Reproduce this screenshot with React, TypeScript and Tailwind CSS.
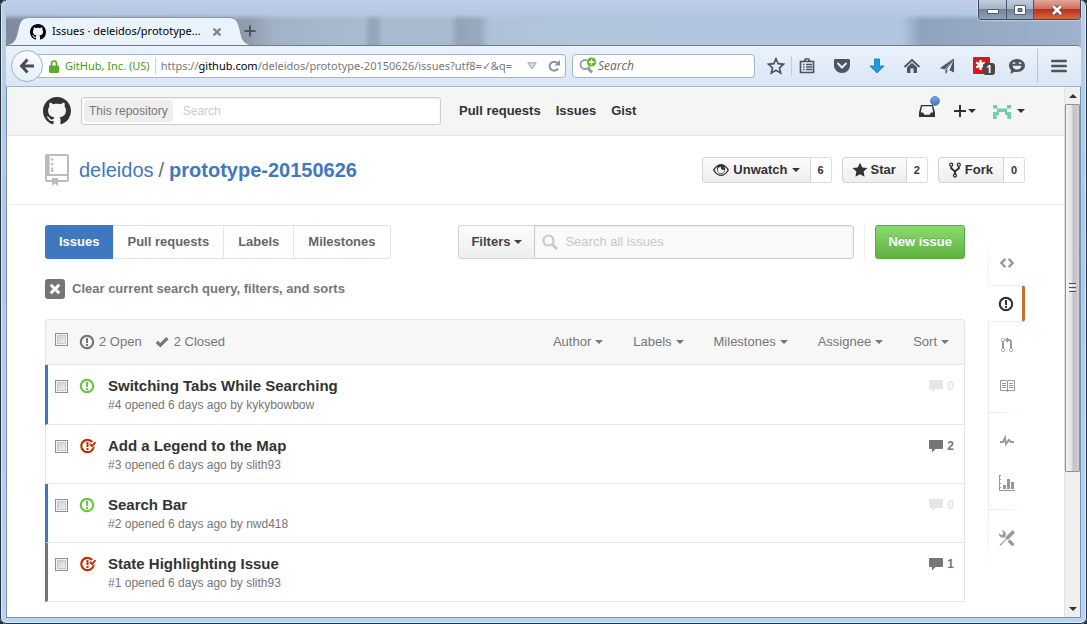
import React from "react";

type IconProps = { className?: string };

const octicons = {
  github: {
    w: 16,
    d: "M8 0C3.58 0 0 3.58 0 8c0 3.54 2.29 6.53 5.47 7.59.4.07.55-.17.55-.38 0-.19-.01-.82-.01-1.49-2.01.37-2.53-.49-2.69-.94-.09-.23-.48-.94-.82-1.13-.28-.15-.68-.52-.01-.53.63-.01 1.08.58 1.23.82.72 1.21 1.87.87 2.33.66.07-.52.28-.87.51-1.07-1.78-.2-3.64-.89-3.64-3.95 0-.87.31-1.59.82-2.15-.08-.2-.36-1.02.08-2.12 0 0 .67-.21 2.2.82.64-.18 1.32-.27 2-.27.68 0 1.36.09 2 .27 1.53-1.04 2.2-.82 2.2-.82.44 1.1.16 1.92.08 2.12.51.56.82 1.27.82 2.15 0 3.07-1.87 3.75-3.65 3.95.29.25.54.73.54 1.48 0 1.07-.01 1.93-.01 2.2 0 .21.15.46.55.38A8.013 8.013 0 0 0 16 8c0-4.42-3.58-8-8-8z",
  },
  opened: {
    w: 14,
    d: "M7 2.900c2.800 0 5.100 2.300 5.100 5.100s-2.300 5.100-5.100 5.100S1.900 10.800 1.900 8 4.200 2.900 7 2.900zM7 .8C3 .8-.2 4-.2 8S3 15.200 7 15.200s7.200-3.200 7.200-7.200S11 .8 7 .8zm1 3.200H6v5h2V4zm0 6H6v2h2v-2z",
  },
  closed: {
    w: 15,
    d: "M6.500 10h2v2h-2v-2zm2-6h-2v5h2V4zm2 1.200L9.200 6.500 12 9.500l4.200-4.700-1.300-1.300L12 6.700l-1.500-1.500zM7.500 13.100C4.700 13.100 2.400 10.800 2.400 8s2.300-5.100 5.100-5.100c1.600 0 3 .7 4 1.900L13 3.300A7.100 7.100 0 0 0 7.500.8C3.500.8.3 4 .3 8s3.200 7.200 7.200 7.200S14.700 12 14.700 8l-2.400 1.900c-.8 1.900-2.600 3.200-4.800 3.200z",
  },
  check: { w: 12, d: "M12.500 5.200l-8.200 8.300L-.3 8.900l2.200-2.200 2.400 2.400 6-6z" },
  comment: {
    w: 14,
    d: "M13 2H1c-.55 0-1 .45-1 1v7c0 .55.45 1 1 1h2v3.500L6.500 11H13c.55 0 1-.45 1-1V3c0-.55-.45-1-1-1z",
  },
  repo: {
    w: 12,
    d: "M4.200 9H3V8h1.200v1zm0-2.200H3v1h1.200v-1zm0-2.200H3v1h1.200v-1zm0-2.400H3v1h1.200v-1zM12 1v12c0 .55-.45 1-1 1H6.500v2L5 14.800 3.500 16v-2H1c-.55 0-1-.45-1-1V1c0-.55.45-1 1-1h10c.55 0 1 .45 1 1zm-1 10H1v2h2.500v-1h3v1H11v-2zm0-10H2.300v9H11V1z",
  },
  eye: {
    w: 16,
    d: "M8.060 2C3 2 0 8 0 8s3 6 8.060 6C13 14 16 8 16 8s-3-6-7.940-6zM8 12.700C5 12.700 2.700 10.500 1.600 8 2.300 6.600 3.300 5.400 4.600 4.500A5 5 0 0 0 8 12a5 5 0 0 0 3.400-7.500c1.300.9 2.300 2.100 3 3.500-1.100 2.500-3.400 4.700-6.400 4.700zM11.300 8c0 1.800-1.500 3.200-3.300 3.200S4.700 9.800 4.700 8 6.200 4.700 8 4.700c-.6 1.500.5 3 1.700 3.200.6.1 1.200 0 1.600-.400z",
  },
  star: { w: 14, d: "M14.500 6l-5.200-.6L7 .7 4.700 5.400-.5 6l3.900 3.600-1 5.100L7 12.200l4.600 2.500-1-5.100z" },
  pull: {
    w: 12,
    d: "M11 11.28V5c-.03-.78-.34-1.47-.94-2.06C9.46 2.35 8.78 2.03 8 2H7V0L4 3l3 3V4h1c.27.02.48.11.69.31.21.2.3.42.31.69v6.28A1.993 1.993 0 0 0 10 15a1.993 1.993 0 0 0 1-3.72zm-1 2.92c-.66 0-1.2-.55-1.2-1.2 0-.65.55-1.2 1.2-1.2.65 0 1.2.55 1.2 1.2 0 .65-.55 1.2-1.2 1.2zM4 3c0-1.11-.89-2-2-2a1.993 1.993 0 0 0-1 3.72v6.56A1.993 1.993 0 0 0 2 15a1.993 1.993 0 0 0 1-3.72V4.72c.59-.34 1-.98 1-1.72zm-.8 10c0 .66-.55 1.2-1.2 1.2-.65 0-1.2-.55-1.2-1.2 0-.65.55-1.2 1.2-1.2.65 0 1.2.55 1.2 1.2zM2 4.2C1.34 4.2.8 3.65.8 3c0-.65.55-1.2 1.2-1.2.65 0 1.2.55 1.2 1.2 0 .65-.55 1.2-1.2 1.2z",
  },
  code: { w: 14, d: "M9.500 3L7.800 4.700 11 8l-3.200 3.300L9.500 13 14.300 8 9.500 3zm-5 0L-.3 8l4.800 5 1.700-1.700L3 8l3.200-3.300L4.500 3z" },
  book: {
    w: 16,
    d: "M3 5h4v1H3V5zm0 3h4V7H3v1zm0 2h4V9H3v1zm11-5h-4v1h4V5zm0 2h-4v1h4V7zm0 2h-4v1h4V9zm2-6v9c0 .55-.45 1-1 1H9.5l-1 1-1-1H2c-.55 0-1-.45-1-1V3c0-.55.45-1 1-1h5.5l1 1 1-1H15c.55 0 1 .45 1 1zm-8 .5L7.5 3H2v9h6V3.5zm7-.5H9.5l-.5.5V12h6V3z",
  },
  pulse: { w: 14, d: "M11.5 8L8.8 5.4 6.6 8.5 5.5 1.6 2.38 8H0v2h3.6l.9-1.8.9 5.4L9 8.5l1.6 1.5H14V8z" },
  graph: {
    w: 16,
    d: "M16 15v1H0V0h2v1H1v3h1v1H1v3h1v1H1v3h1v1H1v2h15zM7 14H4v-4h3v4zm4 0H8V4h3v10zm4 0h-3V7h3v7z",
  },
  tools: {
    w: 16,
    d: "M4.48 7.27c.26.26 1.28 1.33 1.28 1.33l.56-.58-.88-.91 1.69-1.8s-.76-.74-.43-.45c.32-1.19.03-2.51-.87-3.44C4.93.5 3.66.2 2.52.51l1.93 2-.51 1.96-1.89.52-1.93-1.99C-.19 4.17.1 5.48 1 6.4c.94.98 2.29 1.26 3.48.87zm6.44 1.94l-2.33 2.3 3.84 3.98c.31.33.73.49 1.14.49.41 0 .82-.16 1.14-.49.63-.65.63-1.7 0-2.35l-3.79-3.93zM16 2.53L13.55 0 6.33 7.46l.88.91-4.31 4.46-.99.53-1.39 2.27.35.37 2.2-1.44.51-1.02L7.9 9.08l.88.91L16 2.53z",
  },
  x: { w: 12, d: "M8.100 8l3.200 3.200-2.100 2.100L6 10.100l-3.200 3.200-2.100-2.100L3.900 8 .7 4.800l2.100-2.100L6 5.900l3.200-3.200 2.100 2.100z" },
};

function Octicon({ name, className = "h-4" }: { name: keyof typeof octicons; className?: string }) {
  const icon = octicons[name];
  return (
    <svg viewBox={`0 0 ${icon.w} 16`} className={`shrink-0 overflow-visible ${className}`} fill="currentColor" aria-hidden="true">
      <path fillRule="evenodd" d={icon.d} />
    </svg>
  );
}

function ForkIcon() {
  return (
    <svg viewBox="0 0 12 16" className="h-4 shrink-0" fill="none" stroke="currentColor" aria-hidden="true">
      <circle cx="2.200" cy="2.700" r="1.500" strokeWidth="1.300" />
      <circle cx="9.800" cy="2.700" r="1.500" strokeWidth="1.300" />
      <circle cx="6" cy="13.500" r="1.500" strokeWidth="1.300" />
      <path d="M2.200 4.500v1.800L6 9.500l3.800-3.200V4.500M6 9v3" strokeWidth="2" />
    </svg>
  );
}

function Caret({ className = "" }: IconProps) {
  return (
    <svg viewBox="0 0 8 4" className={`h-1 w-2 shrink-0 ${className}`} fill="currentColor" aria-hidden="true">
      <path d="M0 0h8L4 4z" />
    </svg>
  );
}

/* ---------- Browser chrome ---------- */

function TabStrip() {
  return (
    <div className="flex h-[45px] items-end bg-[linear-gradient(to_bottom,#bccfe6_0,#b3c8e3_14px,transparent_20px),linear-gradient(to_right,#7f8b9c_0,#8f9cae_240px,#a3b3c7_270px,#abbbcf_358px,#97a7bb_364px,#97a7bb_370px,#abbbcf_378px,#abbbcf_444px,#95a4b8_452px,#9aaabe_474px,#afc1d6_484px,#b1c5dd_560px,#b1c6de_895px,#8fa3bf_915px,#a0b3cd_1080px)]">
      <div className="flex h-[28px] items-stretch">
        <svg viewBox="0 0 24 28" className="h-7 w-6" aria-hidden="true">
          <path d="M0 28C9 27 10 22 12 13C14 4 16 .5 24 .5V28z" fill="#eaf2fb" />
          <path d="M0 27.500C9 27 10 22 12 13C14 4 16 .5 24 .5" fill="none" stroke="#7c8ba0" strokeWidth=".8" />
        </svg>
        <div className="flex w-[198px] items-center border-t border-[#8b99ad] bg-[#eaf2fb]">
          <Octicon name="github" className="mr-[6px] h-4 w-4 text-black" />
          <span className="flex-1 whitespace-nowrap text-[11px] text-black">Issues · deleidos/prototype...</span>
          <button aria-label="Close tab" className="mr-[7px] text-[#85898f]">
            <svg viewBox="0 0 8 8" className="h-2 w-2" stroke="currentColor" strokeWidth="2.400">
              <path d="M.5.5l7 7M7.500.5l-7 7" />
            </svg>
          </button>
        </div>
        <svg viewBox="0 0 24 28" className="h-7 w-6" aria-hidden="true">
          <path d="M24 28C15 27 14 22 12 13C10 4 8 .5 0 .5V28z" fill="#eaf2fb" />
          <path d="M24 27.500C15 27 14 22 12 13C10 4 8 .5 0 .5" fill="none" stroke="#7c8ba0" strokeWidth=".8" />
        </svg>
      </div>
      <button aria-label="New tab" className="mb-2 ml-[-8px] text-[#4b5563]">
        <svg viewBox="0 0 12 12" className="h-3 w-3" stroke="currentColor" strokeWidth="2">
          <path d="M6 .5v11M.5 6h11" />
        </svg>
      </button>
      <div className="ml-auto flex h-5 self-start overflow-hidden rounded-b border border-t-0 border-[#3c4859] shadow-[0_0_1px_1px_rgba(255,255,255,.4)]">
        <button aria-label="Minimize" className="flex w-[28px] items-center justify-center border-r border-[#4a5669] bg-[linear-gradient(#c3cedd_0,#a3b3c8_45%,#71839c_50%,#91a3bc)] pt-1">
          <svg viewBox="0 0 12 5" className="h-[5px] w-3"><path d="M.5.5h11v4H.5z" fill="#fff" stroke="#535b69" /></svg>
        </button>
        <button aria-label="Maximize" className="flex w-[27px] items-center justify-center border-r border-[#4a5669] bg-[linear-gradient(#c3cedd_0,#a3b3c8_45%,#71839c_50%,#91a3bc)]">
          <svg viewBox="0 0 12 10" className="h-[10px] w-3"><path fillRule="evenodd" d="M.5.5h11v9H.5zM4 3.500h4v3H4z" fill="#fff" stroke="#535b69" /></svg>
        </button>
        <button aria-label="Close" className="flex w-[46px] items-center justify-center bg-[linear-gradient(#e2a79b_0,#d0705e_45%,#b8301a_50%,#cf6a4a)]">
          <svg viewBox="0 0 12 10" className="h-[10px] w-3">
            <path d="M2 1l8 8M10 1L2 9" stroke="#5d4750" strokeWidth="4.500" />
            <path d="M2 1l8 8M10 1L2 9" stroke="#fff" strokeWidth="2.600" />
          </svg>
        </button>
      </div>
    </div>
  );
}

const toolButtons: { label: string; icon: React.ReactNode }[] = [
  {
    label: "Bookmark",
    icon: <path d="M9 1.800l2.200 4.900 5.300.6-4 3.500 1.200 5.200L9 13.300 4.300 16l1.200-5.200-4-3.500 5.300-.6z" fill="none" stroke="currentColor" strokeWidth="1.700" />,
  },
  {
    label: "Bookmarks menu",
    icon: (
      <>
        <path d="M2.500 4.500h13v11h-13zM6 4.500c0-1 1.500-1 1.500-2.500h3c0 1.500 1.500 1.500 1.500 2.500" fill="none" stroke="currentColor" strokeWidth="1.700" />
        <path d="M5 7.500h1.500M8 7.500h6M5 10h1.500M8 10h6M5 12.500h1.500M8 12.500h6" stroke="currentColor" strokeWidth="1.300" />
      </>
    ),
  },
  {
    label: "Pocket",
    icon: (
      <>
        <path d="M2.500 2h13c.8 0 1.500.7 1.500 1.500V8c0 4.500-3.600 8-8 8s-8-3.500-8-8V3.500C1 2.700 1.700 2 2.500 2z" fill="currentColor" />
        <path d="M5 6.500l4 4 4-4" fill="none" stroke="#e7effa" strokeWidth="2" strokeLinecap="round" />
      </>
    ),
  },
  { label: "Downloads", icon: <path d="M6.500 2h5v7H16l-7 7-7-7h4.500z" fill="#1b9be0" stroke="#1276b0" strokeWidth=".8" /> },
  {
    label: "Home",
    icon: (
      <>
        <path d="M1.500 10L9 3l7.500 7" fill="none" stroke="currentColor" strokeWidth="1.900" />
        <path d="M4 10.200L9 5.800l5 4.400V16h-3.500v-4.500h-3V16H4z" fill="currentColor" />
      </>
    ),
  },
  {
    label: "Share",
    icon: (
      <>
        <path d="M15.500 2L2.500 11l4 1.200z" fill="currentColor" stroke="currentColor" strokeWidth=".6" />
        <path d="M16 2v13.500l-4.500-2.200zM8 12.800l1.800.8L8 16.500z" fill="currentColor" />
        <path d="M15.800 2.500L8 12.300v4" fill="none" stroke="currentColor" strokeWidth="1" />
      </>
    ),
  },
  {
    label: "Passwords",
    icon: (
      <>
        <rect x="0" y="0" width="17" height="17" rx="1" fill="#cd1b1f" />
        <path d="M7.500 3v10M3.200 5.500l8.600 5M3.200 10.500l8.600-5" stroke="#fff" strokeWidth="2.400" />
      </>
    ),
  },
  {
    label: "Chat",
    icon: (
      <>
        <path d="M9 2c4.400 0 8 2.900 8 6.500S13.400 15 9 15c-.9 0-1.700-.1-2.500-.3L2.500 17l.6-3.800C1.800 12 1 10.300 1 8.500 1 4.900 4.600 2 9 2z" fill="currentColor" />
        <path d="M4.500 8.800h9c-.3 2.300-2.200 3.800-4.500 3.800S4.800 11.100 4.500 8.800z" fill="#e7effa" />
        <path d="M5 6.800c.3-1.500 1.700-1.500 2 0M11 6.800c.3-1.500 1.700-1.500 2 0" fill="none" stroke="#e7effa" strokeWidth="1.200" />
      </>
    ),
  },
];

function NavBar() {
  return (
    <div className="flex h-[42px] items-center rounded-tr border-b border-t border-b-[#9fb4d1] border-t-[#6d7c92] bg-[linear-gradient(#eaf2fb,#dae6f5)] pl-[5px] pr-[14px]">
      <button aria-label="Back" className="z-10 flex h-8 w-8 shrink-0 items-center justify-center rounded-full border border-[#a2b0c4] bg-[linear-gradient(#fbfdff,#e6eef8)] text-[#484e58]">
        <svg viewBox="0 0 16 16" className="h-4 w-4" fill="none" stroke="currentColor" strokeWidth="3">
          <path d="M8.500 1.500L2.500 8l6 6.500M3 8h12" />
        </svg>
      </button>
      <div className="ml-[-6px] flex h-6 min-w-0 flex-1 items-center rounded-r-sm border border-[#a3b4cc] bg-white pl-[11px] text-[11px]">
        <svg viewBox="0 0 10 13" className="h-[13px] w-[10px] shrink-0" aria-hidden="true">
          <path d="M2.500 6V3.500a2.500 2.500 0 0 1 5 0V6" fill="none" stroke="#5aa62b" strokeWidth="1.700" />
          <path d="M0 5.500h10V12l-1 1H1l-1-1z" fill="#5aad2a" />
        </svg>
        <span className="ml-[6px] whitespace-nowrap text-[#4a9a1c]">GitHub, Inc. (US)</span>
        <span className="mx-[5px] h-4 w-px shrink-0 bg-[#d0d5db]" />
        <label htmlFor="address" className="whitespace-nowrap text-[#777]">
          https://<span className="text-black">github.com</span>
        </label>
        <input id="address" aria-label="Address" defaultValue="/deleidos/prototype-20150626/issues?utf8=✓&q=" className="min-w-0 flex-1 bg-transparent text-[#777] outline-none" />
        <button aria-label="Show history" className="px-[6px]">
          <svg viewBox="0 0 10 8" className="h-2 w-[10px]"><path d="M.8.8h8.400L5 7z" fill="#d7dade" stroke="#a3a8af" /></svg>
        </button>
        <button aria-label="Reload" className="px-[5px] text-[#8b9096]">
          <svg viewBox="0 0 12 12" className="h-3 w-3" fill="none" stroke="currentColor" strokeWidth="2">
            <path d="M9.500 3.200A4.500 4.500 0 1 0 10 8.500" />
            <path d="M12 0v5.500H6.500z" fill="currentColor" stroke="none" />
          </svg>
        </button>
      </div>
      <label className="ml-[6px] flex h-6 w-[183px] items-center rounded-sm border border-[#a3b4cc] bg-white pl-[6px]">
        <svg viewBox="0 0 18 18" className="mr-[1px] h-[18px] w-[18px] shrink-0" aria-hidden="true">
          <circle cx="6" cy="7.500" r="4.500" fill="none" stroke="#929aa2" strokeWidth="1.800" />
          <path d="M9 11l4 4.500" stroke="#929aa2" strokeWidth="2.800" />
          <circle cx="12.500" cy="5" r="4.800" fill="#53b51c" stroke="#fff" strokeWidth=".6" />
          <path d="M12.500 2.200v5.600M9.700 5h5.600" stroke="#fff" strokeWidth="1.500" />
        </svg>
        <input aria-label="Search the web" placeholder="Search" className="min-w-0 flex-1 bg-transparent font-['Open_Sans',sans-serif] text-[12px] italic outline-none placeholder:text-[#666]" />
      </label>
      <div className="ml-[12px] flex items-center gap-[17px] text-[#4d545e]">
        {toolButtons.map((b, i) => (
          <React.Fragment key={b.label}>
            <button aria-label={b.label} className="relative">
              <svg viewBox="0 0 18 18" className="h-[18px] w-[18px]">{b.icon}</svg>
              {b.label === "Passwords" && (
                <span className="absolute -right-1 top-[6px] flex h-3 w-3 items-center justify-center rounded-[3px] bg-[#484848] text-[10px] font-bold leading-none text-white">1</span>
              )}
            </button>
            {i === 0 && <span className="-mx-[11px] h-5 w-px bg-[#c3cedd]" />}
          </React.Fragment>
        ))}
        <span className="-ml-[6px] -mr-[4px] h-[34px] w-px bg-[#bac7d8]" />
        <button aria-label="Open menu">
          <svg viewBox="0 0 16 14" className="h-[14px] w-4" stroke="currentColor" strokeWidth="2.400" strokeLinecap="round">
            <path d="M1.200 2h13.600M1.200 7h13.600M1.200 12h13.600" />
          </svg>
        </button>
      </div>
    </div>
  );
}

function ScrollBar() {
  return (
    <div className="flex w-4 shrink-0 flex-col border-l border-[#e3e3e3] bg-[#f0f0f0] text-[#333]">
      <button aria-label="Scroll up" className="flex h-[17px] items-center justify-center">
        <Caret className="rotate-180" />
      </button>
      <div className="flex flex-[74] flex-col items-center justify-center gap-px rounded-[1px] border border-[#909090] bg-[linear-gradient(to_right,#f4f4f4,#e2e2e2_45%,#c2c2c6_55%,#d0d0d3)]">
        <span className="h-px w-[7px] bg-[#555]" />
        <span className="h-px w-[7px] bg-white" />
        <span className="h-px w-[7px] bg-[#555]" />
        <span className="h-px w-[7px] bg-white" />
        <span className="h-px w-[7px] bg-[#555]" />
      </div>
      <div className="flex-[26]" />
      <button aria-label="Scroll down" className="flex h-[17px] items-center justify-center">
        <Caret />
      </button>
    </div>
  );
}

/* ---------- Page ---------- */

function SiteHeader() {
  return (
    <header className="flex h-[49px] items-center border-b border-[#e5e5e5] bg-[#f5f5f5] pl-[36px] pr-[39px]">
      <a href="#home" aria-label="Homepage" className="text-[#333]">
        <Octicon name="github" className="h-7 w-7" />
      </a>
      <div className="ml-[10px] flex h-7 w-[360px] items-center rounded-[3px] border border-[#ccc] bg-white p-[2px] shadow-[inset_0_1px_2px_rgba(0,0,0,.075)]">
        <label htmlFor="site-search" className="flex h-full items-center rounded-sm bg-[#eee] px-[5px] text-[12px] text-[#767676]">
          This repository
        </label>
        <input id="site-search" placeholder="Search" className="min-w-0 flex-1 bg-transparent px-[10px] text-[12px] outline-none placeholder:text-[#ccc]" />
      </div>
      <nav className="ml-[18px] flex gap-[15px] text-[13px] font-bold">
        <a href="#pulls">Pull requests</a>
        <a href="#issues">Issues</a>
        <a href="#gist">Gist</a>
      </nav>
      <div className="ml-auto flex items-center">
        <a href="#notifications" aria-label="Notifications" className="relative">
          <svg viewBox="0 0 16 14" className="h-[14px] w-4" aria-hidden="true">
            <path fillRule="evenodd" d="M2 1h12l2 7.500V13H0V8.500zM3 2.300L1.800 8.500H4l1.300 2.200h5.400L12 8.500h2.200L13 2.300z" fill="#333" />
          </svg>
          <span className="absolute -right-[5px] -top-[8px] h-[10px] w-[10px] rounded-full border border-[#5c88c6] bg-[linear-gradient(#7aa1d4,#4078c0)]" />
        </a>
        <button aria-label="Create new" className="ml-[19px] flex items-center gap-[2px]">
          <svg viewBox="0 0 12 12" className="h-3 w-3" stroke="currentColor" strokeWidth="2"><path d="M6 0v12M0 6h12" /></svg>
          <Caret />
        </button>
        <button aria-label="Account" className="ml-[16px] flex items-center gap-[5px]">
          <svg viewBox="0 0 20 20" className="h-5 w-5" fill="#70d0a0" aria-hidden="true">
            <path d="M1 4h4v3.500H1zM15 4h4v3.500h-4zM5 7.500h10V11H5zM1 11h6v3H1zM13 11h6v3h-6zM1 14h3.600v4H1zM15.400 14H19v4h-3.600z" />
          </svg>
          <Caret />
        </button>
      </div>
    </header>
  );
}

function SocialButton({ icon, label, count, caret }: { icon: React.ReactNode; label: string; count: string; caret?: boolean }) {
  return (
    <div className="flex h-[26px] text-[13px] font-bold">
      <button className="flex items-center gap-1 rounded-l-[3px] border border-[#d5d5d5] bg-[linear-gradient(#fcfcfc,#eee)] px-[10px]">
        {icon}
        {label}
        {caret && <Caret />}
      </button>
      <a href="#count" className="flex w-[21px] items-center justify-center rounded-r-[3px] border border-l-0 border-[#ddd] text-[11px]">
        {count}
      </a>
    </div>
  );
}

function RepoHeader() {
  return (
    <div className="flex h-[69px] items-center justify-between border-b border-[#eee] pl-[38px] pr-[39px]">
      <h1 className="flex items-center text-[20px] text-[#4078c0]">
        <Octicon name="repo" className="mr-[10px] h-8 w-6 text-[#bbb]" />
        <a href="#owner">deleidos</a>
        <span className="mx-[5px] text-[#666]">/</span>
        <a href="#repo" className="font-bold">prototype-20150626</a>
      </h1>
      <div className="flex gap-[10px]">
        <SocialButton icon={<Octicon name="eye" />} label="Unwatch" count="6" caret />
        <SocialButton icon={<Octicon name="star" />} label="Star" count="2" />
        <SocialButton icon={<ForkIcon />} label="Fork" count="0" />
      </div>
    </div>
  );
}

function IssueToolbar() {
  return (
    <div className="flex h-[34px] text-[13px] font-bold text-[#666]">
      <nav className="flex">
        <a href="#issues" className="flex items-center rounded-l-[3px] bg-[#4078c0] px-[14px] text-white">Issues</a>
        {["Pull requests", "Labels", "Milestones"].map((t) => (
          <a key={t} href="#tab" className="flex items-center border border-l-0 border-[#e5e5e5] px-[14px] last:rounded-r-[3px]">
            {t}
          </a>
        ))}
      </nav>
      <div className="ml-auto flex w-[396px]">
        <button className="flex items-center gap-1 rounded-l-[3px] border border-r-0 border-[#d5d5d5] bg-[linear-gradient(#fcfcfc,#eee)] px-3 text-[#444]">
          Filters <Caret />
        </button>
        <label className="flex min-w-0 flex-1 items-center rounded-r-[3px] border border-[#ccc] bg-[#fafafa] px-[7px] font-normal shadow-[inset_0_1px_2px_rgba(0,0,0,.075)]">
          <svg viewBox="0 0 16 16" className="h-4 w-4 shrink-0" fill="none" stroke="#c8c8c8" aria-hidden="true">
            <circle cx="6.500" cy="6.500" r="5" strokeWidth="2.200" />
            <path d="M10.500 10.500l4.500 4.500" strokeWidth="2.800" />
          </svg>
          <input aria-label="Search all issues" placeholder="Search all issues" className="ml-[7px] min-w-0 flex-1 bg-transparent outline-none placeholder:text-[#c8c8c8]" />
        </label>
      </div>
      <div className="ml-[10px] border-l border-[#eee] pl-[10px]">
        <button className="h-full rounded-[3px] border border-[#5ca941] bg-[linear-gradient(#8add6d,#60b044)] px-3 text-white [text-shadow:0_-1px_0_rgba(0,0,0,.15)]">New issue</button>
      </div>
    </div>
  );
}

function CheckBox({ label }: { label: string }) {
  return (
    <input
      type="checkbox"
      aria-label={label}
      className="h-[13px] w-[13px] shrink-0 appearance-none border border-[#8e8f8f] bg-[linear-gradient(135deg,#c5c9cd,#f6f6f6)] shadow-[inset_0_0_0_1px_#f4f4f4,inset_0_0_0_2px_#c6c9cc]"
    />
  );
}

const issues = [
  { id: 4, title: "Switching Tabs While Searching", user: "kykybowbow", open: true, comments: 0, mark: "border-l-[3px] border-l-[#4078c0] pl-[7px]" },
  { id: 3, title: "Add a Legend to the Map", user: "slith93", open: false, comments: 2, mark: "border-l border-l-[#e5e5e5] pl-[9px]" },
  { id: 2, title: "Search Bar", user: "nwd418", open: true, comments: 0, mark: "border-l-[3px] border-l-[#4078c0] pl-[7px]" },
  { id: 1, title: "State Highlighting Issue", user: "slith93", open: false, comments: 1, mark: "border-l-[3px] border-l-[#767676] pl-[7px]" },
];

function IssueList() {
  return (
    <section className="mt-5">
      <div className="flex h-[46px] items-center rounded-t-[3px] border border-[#e5e5e5] bg-[#f7f7f7] pl-[9px] pr-[15px] text-[13px] text-[#767676]">
        <div className="mb-[5px] flex"><CheckBox label="Select all issues" /></div>
        <a href="#open" className="ml-3 flex items-center gap-[5px]"><Octicon name="opened" /> 2 Open</a>
        <a href="#closed" className="ml-[14px] flex items-center gap-[6px]"><Octicon name="check" /> 2 Closed</a>
        <div className="ml-auto flex gap-[30px]">
          {["Author", "Labels", "Milestones", "Assignee", "Sort"].map((f) => (
            <button key={f} className="flex items-center gap-1">{f} <Caret /></button>
          ))}
        </div>
      </div>
      <ul>
        {issues.map((it) => (
          <li key={it.id} className={`flex h-[59px] items-start border-b border-r border-b-[#e9e9e9] border-r-[#e5e5e5] pr-[10px] pt-[11px] first:h-[60px] ${it.mark}`}>
            <div className="flex h-5 items-center"><CheckBox label={`Select issue ${it.id}`} /></div>
            <span className={`ml-3 flex h-5 w-4 items-center ${it.open ? "text-[#6cc644]" : "text-[#bd2c00]"}`}>
              <Octicon name={it.open ? "opened" : "closed"} />
            </span>
            <div className="ml-3 flex-1">
              <a href="#issue" className="block text-[15px] font-bold leading-5 text-[#333]">{it.title}</a>
              <p className="text-[12px] leading-[18px] text-[#767676]">
                #{it.id} opened 6 days ago by <a href="#user">{it.user}</a>
              </p>
            </div>
            <a href="#comments" className={`flex h-5 items-center gap-1 text-[12px] font-bold ${it.comments ? "text-[#767676]" : "text-[#e6e6e6]"}`}>
              <Octicon name="comment" /> {it.comments}
            </a>
          </li>
        ))}
      </ul>
    </section>
  );
}

function SideNav() {
  const item = "flex h-[35px] items-center justify-center";
  const line = "h-px bg-[linear-gradient(to_right,#e5e5e5,#fff)]";
  return (
    <nav className="mt-[7px] w-[37px] self-start bg-[linear-gradient(#fff,#ececec_20%,#ececec_80%,#fff)] bg-[length:1px_100%] bg-no-repeat pb-[16px] pt-[13px] text-[#999]">
      <a href="#code" aria-label="Code" className={item}><Octicon name="code" /></a>
      <a href="#issues" aria-label="Issues" className="mt-[5px] flex h-[37px] items-center justify-center rounded-r-[3px] border-y border-r-[3px] border-y-[#eee] border-r-[#c9702a] bg-white pl-[2px] text-[#333]"><Octicon name="opened" /></a>
      <a href="#pulls" aria-label="Pull requests" className={`${item} mt-[5px]`}><Octicon name="pull" /></a>
      <a href="#wiki" aria-label="Wiki" className={`${item} mt-[6px]`}><Octicon name="book" /></a>
      <div className={`${line} mt-[9px]`} />
      <a href="#pulse" aria-label="Pulse" className={`${item} mt-[10px]`}><Octicon name="pulse" /></a>
      <a href="#graphs" aria-label="Graphs" className={`${item} mt-[7px]`}><Octicon name="graph" /></a>
      <div className={`${line} mt-[9px]`} />
      <a href="#settings" aria-label="Settings" className={`${item} mt-[10px]`}><Octicon name="tools" /></a>
    </nav>
  );
}

export default function App() {
  return (
    <div className="flex min-h-screen flex-col bg-[#1c2634] font-['Noto_Sans',sans-serif]">
      <div className="flex flex-1 flex-col rounded-md bg-[linear-gradient(#b9cfe9,#a9cbee_40%,#b5d5f6)] px-[6px] pb-[6px] shadow-[inset_0_0_0_1px_#27303d,inset_0_0_0_2px_#dcebfa]">
        <TabStrip />
        <NavBar />
        <div className="flex flex-1 border border-t-0 border-[#7893b5] bg-white">
          <main className="min-w-0 flex-1 font-['Liberation_Sans',Arial,sans-serif] text-[#333]">
            <SiteHeader />
            <RepoHeader />
            <div className="flex justify-between gap-[23px] pb-[15px] pl-[38px] pr-[39px] pt-5">
              <div className="min-w-0 flex-1">
                <IssueToolbar />
                <a href="#clear" className="mt-5 flex h-5 items-center gap-[7px] text-[13px] font-bold text-[#767676]">
                  <span className="flex h-5 w-5 items-center justify-center rounded-[3px] bg-[#767676] text-white"><Octicon name="x" /></span>
                  Clear current search query, filters, and sorts
                </a>
                <IssueList />
              </div>
              <SideNav />
            </div>
          </main>
          <ScrollBar />
        </div>
      </div>
    </div>
  );
}
